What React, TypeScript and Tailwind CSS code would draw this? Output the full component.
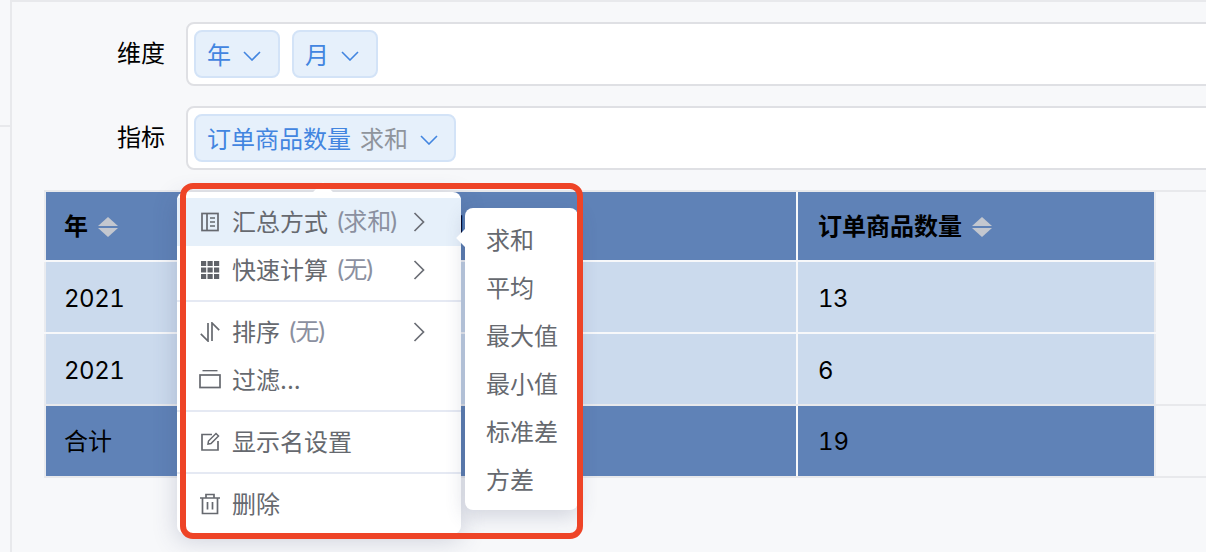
import React from "react";

const Chevron = ({ className = "" }: { className?: string }) => (
  <svg width="18" height="10" viewBox="0 0 18 10" fill="none" className={className}>
    <path d="M1 1 L9 9 L17 1" stroke="currentColor" strokeWidth="1.6" />
  </svg>
);

const ChevronRight = () => (
  <svg width="12" height="20" viewBox="0 0 12 20" fill="none" className="ml-auto shrink-0 text-[#6b6e75]">
    <path d="M1.5 1 L10.5 10 L1.5 19" stroke="currentColor" strokeWidth="1.7" />
  </svg>
);

const Sort = () => (
  <svg width="20" height="20" viewBox="0 0 20 20" className="ml-[10px] shrink-0">
    <path d="M10 0 L20 9 H0 Z" fill="#c3c7cf" />
    <path d="M0 11 H20 L10 20 Z" fill="#c3c7cf" />
  </svg>
);

const S = { stroke: "#66696f", strokeWidth: 1.7, fill: "none" };

const IconList = () => (
  <svg width="20" height="20" viewBox="0 0 20 20">
    <rect x="2" y="1.5" width="16" height="17" {...S} />
    <path d="M7 1.5 V18.5 M10 6 H15 M10 10 H15 M10 14 H15" {...S} />
  </svg>
);
const IconGrid = () => (
  <svg width="20" height="20" viewBox="0 0 20 20" fill="#5f6268">
    {[1, 7.5, 14].flatMap((y) =>
      [1, 7.5, 14].map((x) => <rect key={`${x}-${y}`} x={x} y={y} width="5.2" height="5" />)
    )}
  </svg>
);
const IconSort = () => (
  <svg width="20" height="20" viewBox="0 0 20 20">
    <path d="M8 1 V19 L0.8 11.8 M12 19 V1 L19.2 8.2" {...S} />
  </svg>
);
const IconFilter = () => (
  <svg width="22" height="20" viewBox="0 0 22 20" className="ml-[-1px]">
    <rect x="1" y="5" width="20" height="12.5" {...S} />
    <path d="M3.5 0.5 H18.5" {...S} />
  </svg>
);
const IconEdit = () => (
  <svg width="20" height="20" viewBox="0 0 20 20">
    <path d="M12 2.5 H2 V18 H18 V9" {...S} />
    <path d="M8 12 L8.5 9 L16 1.5 L18.5 4 L11 11.5 Z" {...S} strokeWidth={1.5} />
  </svg>
);
const IconTrash = () => (
  <svg width="22" height="22" viewBox="0 0 22 22" className="ml-[-1px]">
    <path d="M1 5 H21 M7 5 V1.5 H15 V5 M3.5 5 V20.5 H18.5 V5 M8.5 9 V16.5 M13.5 9 V16.5" {...S} />
  </svg>
);

const Tag = ({ children, w }: { children: React.ReactNode; w: string }) => (
  <div className={`${w} flex h-[48px] items-center rounded-[8px] border-2 border-[#d3e3f7] bg-[#e6f0fb] pl-[11px] pt-[4px] text-[#4285e0]`}>
    {children}
  </div>
);

const FormRow = ({ label, children }: { label: string; children: React.ReactNode }) => (
  <div className="flex items-center">
    <div className="w-[153px] shrink-0 text-right text-black">{label}</div>
    <div className="ml-[21px] flex h-[64px] w-[1100px] shrink-0 items-center gap-[12px] rounded-[8px] border-2 border-[#dfe0e4] bg-white pl-[6px]">
      {children}
    </div>
  </div>
);

const Row = ({ h, bg, cells, t }: { h: string; bg: string; cells: React.ReactNode[]; t: string }) => (
  <div className={`flex w-[1112px] gap-[2px] border-x-2 border-[#e9ebef] ${h}`}>
    <div className={`${bg} flex w-[374px] items-center pl-[18px] text-black ${t}`}>{cells[0]}</div>
    <div className={`${bg} flex w-[374px] items-center pl-[20px] text-black ${t}`}>{cells[1]}</div>
    <div className={`${bg} flex w-[356px] items-center pl-[20px] text-black ${t}`}>{cells[2]}</div>
  </div>
);

const Note = ({ children }: { children: string }) => (
  <span className="ml-[8px] text-[#8b90a0]">
    <span className="mr-[-1.5px]">(</span>
    {children}
    <span className="ml-[-1.5px]">)</span>
  </span>
);

const Item = ({
  icon,
  text,
  note,
  arrow,
  active,
}: {
  icon: React.ReactNode;
  text: string;
  note?: string;
  arrow?: boolean;
  active?: boolean;
}) => (
  <div className={`flex h-[48px] items-center pl-[23px] pr-[36px] text-[#66696f] ${active ? "bg-[#e6f0fa]" : ""}`}>
    <span className="flex w-[32px] shrink-0 items-center">{icon}</span>
    <span className="pt-[1px]">{text}</span>
    {note && <Note>{note}</Note>}
    {arrow && <ChevronRight />}
  </div>
);

const Sep = () => <div className="my-[6px] h-[2px] bg-[#e5e9f3]" />;

export default function App() {
  return (
    <div className="relative flex h-[552px] w-[1206px] overflow-hidden bg-[#f7f8fa] text-[24px] leading-[32px] [font-family:Inter,'Noto_Sans_CJK_SC',sans-serif]">
      <div className="h-full w-[12px] shrink-0 border-r-2 border-[#e8e9ec] pt-[125px]">
        <div className="h-[2px] bg-[#e8e9ec]" />
      </div>
      <div className="min-w-0 flex-1">
        <div className="h-[2px] bg-[#e8e9ec]" />
        <div className="flex flex-col gap-[20px] pt-[20px]">
          <FormRow label="维度">
            <Tag w="w-[86px]">
              <span>年</span>
              <Chevron className="ml-[12px]" />
            </Tag>
            <Tag w="w-[86px]">
              <span>月</span>
              <Chevron className="ml-[12px]" />
            </Tag>
          </FormRow>
          <FormRow label="指标">
            <Tag w="w-[262px]">
              <span>订单商品数量</span>
              <span className="ml-[9px] text-[#8f949c]">求和</span>
              <Chevron className="ml-[12px]" />
            </Tag>
          </FormRow>
        </div>
        <div className="ml-[32px] mt-[20px] border-t-2 border-[#e8e9ec]">
          <div className="flex flex-col gap-[2px]">
            <Row
              h="h-[68px]"
              bg="bg-[#5f82b7]"
              t="pt-[1px] font-semibold"
              cells={[
                <>
                  年<Sort />
                </>,
                <>
                  月<Sort />
                </>,
                <>
                  订单商品数量
                  <Sort />
                </>,
              ]}
            />
            <Row h="h-[70px]" bg="bg-[#cbdaed]" t="pt-[3px] tabular-nums tracking-[-0.5px]" cells={["2021", "1", "13"]} />
            <Row h="h-[70px]" bg="bg-[#cbdaed]" t="pt-[3px] tabular-nums tracking-[-0.5px]" cells={["2021", "2", "6"]} />
          </div>
        </div>
        <div className="ml-[32px] border-y-2 border-[#e8e9ec]">
          <Row h="h-[70px]" bg="bg-[#5f82b7]" t="pt-[1px] tabular-nums" cells={["合计", "", "19"]} />
        </div>
      </div>

      {/* Context menu */}
      <div className="absolute left-[177px] top-[192px] z-10 w-[284px] rounded-[8px] bg-white py-[6px] shadow-[0_6px_24px_rgba(60,70,110,0.22)]">
        <div className="absolute left-[139px] top-[-7px] h-[14px] w-[14px] rotate-45 bg-white" />
        <div className="relative">
          <Item icon={<IconList />} text="汇总方式" note="求和" arrow active />
          <Item icon={<IconGrid />} text="快速计算" note="无" arrow />
          <Sep />
          <Item icon={<IconSort />} text="排序" note="无" arrow />
          <Item icon={<IconFilter />} text="过滤..." />
          <Sep />
          <Item icon={<IconEdit />} text="显示名设置" />
          <Sep />
          <Item icon={<IconTrash />} text="删除" />
        </div>
      </div>

      {/* Submenu */}
      <div className="absolute left-[465px] top-[208px] z-20 flex h-[302px] w-[113px] flex-col rounded-[8px] bg-white pl-[21px] pt-[8px] text-[#66696f] shadow-[0_6px_20px_rgba(60,70,110,0.2)]">
        <div className="absolute left-[-6px] top-[23px] h-[14px] w-[14px] rotate-45 bg-white" />
        {["求和", "平均", "最大值", "最小值", "标准差", "方差"].map((t) => (
          <div key={t} className="relative flex h-[48px] shrink-0 items-center pt-[1px]">
            {t}
          </div>
        ))}
      </div>

      {/* Annotation */}
      <div className="pointer-events-none absolute left-[180px] top-[183px] z-30 h-[356px] w-[403px] rounded-[13px] border-[6px] border-[#ee4427]" />
    </div>
  );
}
